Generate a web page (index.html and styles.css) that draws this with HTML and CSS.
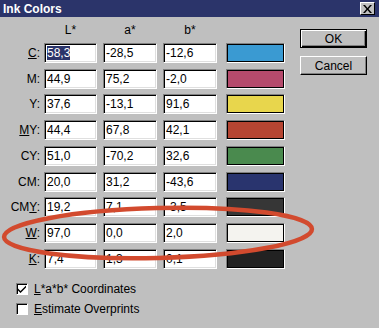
FILE: index.html
```html
<!DOCTYPE html>
<html lang="en">
<head>
  <meta charset="UTF-8">
  <title>Ink Colors</title>
  <link rel="stylesheet" href="styles.css">
</head>
<body>
  <div class="dialog">
    <div class="titlebar">
      <span class="title">Ink Colors</span>
      <span class="close">
        <svg width="9" height="8" viewBox="0 0 9 8"><path d="M0 0h2l2.5 3 2.5-3h2L5.5 4 9 8H7L4.5 5 2 8H0l3.5-4z" fill="#000"/></svg>
      </span>
    </div>

    <div class="content">
      <div class="grid">
        <span></span><span class="head">L*</span><span class="head">a*</span><span class="head">b*</span><span></span>

        <label><u>C</u>:</label>
        <span class="field"><span class="sel">58,3</span></span>
        <span class="field">-28,5</span>
        <span class="field">-12,6</span>
        <span class="swatch sw-c"></span>

        <label>M:</label>
        <span class="field">44,9</span>
        <span class="field">75,2</span>
        <span class="field">-2,0</span>
        <span class="swatch sw-m"></span>

        <label>Y:</label>
        <span class="field">37,6</span>
        <span class="field">-13,1</span>
        <span class="field">91,6</span>
        <span class="swatch sw-y"></span>

        <label><u>M</u>Y:</label>
        <span class="field">44,4</span>
        <span class="field">67,8</span>
        <span class="field">42,1</span>
        <span class="swatch sw-my"></span>

        <label>CY:</label>
        <span class="field">51,0</span>
        <span class="field">-70,2</span>
        <span class="field">32,6</span>
        <span class="swatch sw-cy"></span>

        <label>CM:</label>
        <span class="field">20,0</span>
        <span class="field">31,2</span>
        <span class="field">-43,6</span>
        <span class="swatch sw-cm"></span>

        <label>CM<u>Y</u>:</label>
        <span class="field">19,2</span>
        <span class="field">7,1</span>
        <span class="field">-3,5</span>
        <span class="swatch sw-cmy"></span>

        <label><u>W</u>:</label>
        <span class="field">97,0</span>
        <span class="field">0,0</span>
        <span class="field">2,0</span>
        <span class="swatch sw-w"></span>

        <label><u>K</u>:</label>
        <span class="field">7,4</span>
        <span class="field">1,3</span>
        <span class="field">0,1</span>
        <span class="swatch sw-k"></span>
      </div>

      <div class="buttons">
        <button class="btn default">OK</button>
        <button class="btn">Cancel</button>
      </div>
    </div>

    <div class="options">
      <div class="check-row">
        <span class="checkbox">
          <svg width="8" height="8" viewBox="0 0 8 8"><path d="M0 3.5l2.5 2.5 5.5-5.5v2l-5.5 5.5-2.5-2.5z" fill="#000"/></svg>
        </span>
        <span><u>L</u>*a*b* Coordinates</span>
      </div>
      <div class="check-row">
        <span class="checkbox"></span>
        <span><u>E</u>stimate Overprints</span>
      </div>
    </div>

    <svg class="mark" width="379" height="328" viewBox="0 0 379 328">
      <ellipse cx="158" cy="233" rx="154" ry="25" transform="rotate(-1.5 158 233)" fill="none" stroke="#d24a2e" stroke-width="4.5"/>
    </svg>
  </div>
</body>
</html>
```

FILE: styles.css
```css
html, body {
  margin: 0;
  padding: 0;
}
body {
  font-family: "Liberation Sans", Arial, sans-serif;
  font-size: 12px;
  color: #000;
}
.dialog {
  position: relative;
  width: 379px;
  height: 328px;
  background: #bfbfbf;
  overflow: hidden;
}
.titlebar {
  height: 17px;
  background: #2b346a;
  display: flex;
  align-items: center;
  justify-content: space-between;
  padding: 0 4px 0 3px;
}
.title {
  color: #fff;
  font-weight: bold;
  font-size: 12px;
}
.close {
  width: 13px;
  height: 11px;
  background: #c0c0c0;
  border-top: 1px solid #fff;
  border-left: 1px solid #fff;
  border-right: 1px solid #000;
  border-bottom: 1px solid #000;
  display: flex;
  align-items: center;
  justify-content: center;
}
.content {
  display: flex;
  padding-top: 6px;
}
.grid {
  display: grid;
  grid-template-columns: 38px 53px 54px 54px 62px;
  grid-auto-rows: 20px;
  grid-template-rows: 14px;
  column-gap: 6px;
  row-gap: 5.75px;
}
.head {
  text-align: center;
  line-height: 14px;
}
label {
  text-align: right;
  line-height: 20px;
  margin-right: -2px;
}
.field {
  box-sizing: border-box;
  background: #fff;
  border-top: 1px solid #808080;
  border-left: 1px solid #808080;
  border-right: 1px solid #fff;
  border-bottom: 1px solid #fff;
  box-shadow: inset 1px 1px 0 #000, inset -1px -1px 0 #dfdfdf;
  padding: 0 0 0 2px;
  line-height: 18px;
  white-space: nowrap;
  overflow: hidden;
}
.sel {
  background: #2b346a;
  color: #fff;
}
.swatch {
  box-sizing: border-box;
  margin-left: 3px;
  width: 59px;
  border-top: 1px solid #808080;
  border-left: 1px solid #808080;
  border-right: 1px solid #fff;
  border-bottom: 1px solid #fff;
  box-shadow: inset 0 0 0 1px #000;
}
.sw-c { background: #3a9ad2; }
.sw-m { background: #b54a6c; }
.sw-y { background: #e8d64c; }
.sw-my { background: #b64532; }
.sw-cy { background: #4a8a4e; }
.sw-cm { background: #29346e; }
.sw-cmy { background: #363636; }
.sw-w { background: #f4f3ef; }
.sw-k { background: #222; }
.buttons {
  display: flex;
  flex-direction: column;
  gap: 8px;
  margin-left: 15px;
  padding-top: 6px;
}
.btn {
  box-sizing: border-box;
  width: 67px;
  height: 19px;
  padding: 0;
  font-family: inherit;
  font-size: 12px;
  color: #000;
  background: #c0c0c0;
  border-top: 1px solid #fff;
  border-left: 1px solid #fff;
  border-right: 1px solid #000;
  border-bottom: 1px solid #000;
  box-shadow: inset -1px -1px 0 #808080;
}
.btn.default {
  border: 1px solid #000;
  box-shadow: inset 1px 1px 0 #fff, inset -1px -1px 0 #000, inset -2px -2px 0 #808080;
}
.options {
  display: flex;
  flex-direction: column;
  gap: 4px;
  padding: 12px 0 0 16px;
}
.check-row {
  display: flex;
  align-items: center;
  gap: 6px;
  height: 16px;
}
.checkbox {
  box-sizing: border-box;
  width: 12px;
  height: 12px;
  background: #fff;
  border-top: 1px solid #808080;
  border-left: 1px solid #808080;
  border-right: 1px solid #fff;
  border-bottom: 1px solid #fff;
  box-shadow: inset 1px 1px 0 #000;
  display: flex;
  align-items: center;
  justify-content: center;
}
.mark {
  position: absolute;
  left: 0;
  top: 0;
  pointer-events: none;
}
```
